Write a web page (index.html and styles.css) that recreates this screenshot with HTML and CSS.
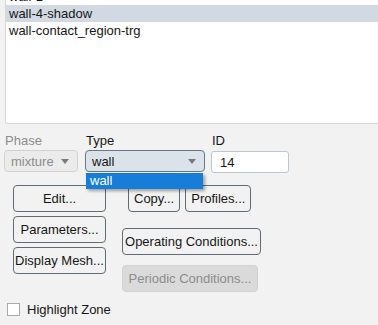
FILE: index.html
```html
<!DOCTYPE html>
<html lang="en">
<head>
    <meta charset="UTF-8">
    <title>Boundary Conditions</title>
    <link rel="stylesheet" href="styles.css">
</head>
<body>
    <div class="listbox">
        <ul class="rows">
            <li>wall-1</li>
            <li class="selected">wall-4-shadow</li>
            <li>wall-contact_region-trg</li>
        </ul>
    </div>

    <div class="fields">
        <div class="field phase">
            <label class="label disabled">Phase</label>
            <div class="combo combo-disabled">
                <span>mixture</span>
                <span class="arrow"></span>
            </div>
        </div>
        <div class="field type">
            <label class="label">Type</label>
            <div class="combo-wrap">
                <div class="combo combo-open">
                    <span>wall</span>
                    <span class="arrow"></span>
                </div>
                <ul class="popup">
                    <li class="active">wall</li>
                </ul>
            </div>
        </div>
        <div class="field id">
            <label class="label">ID</label>
            <input class="text-input" type="text" value="14">
        </div>
    </div>

    <div class="actions">
        <div class="left-col">
            <button class="btn btn-wide">Edit...</button>
            <button class="btn btn-wide">Parameters...</button>
            <button class="btn btn-wide">Display Mesh...</button>
        </div>
        <div class="right-col">
            <div class="btn-row">
                <button class="btn">Copy...</button>
                <button class="btn">Profiles...</button>
            </div>
            <button class="btn btn-operating">Operating Conditions...</button>
            <button class="btn btn-periodic" disabled>Periodic Conditions...</button>
        </div>
    </div>

    <label class="check">
        <span class="box"></span>
        Highlight Zone
    </label>
</body>
</html>
```

FILE: styles.css
```css
body {
    margin: 0;
    background-color: #f2f2f2;
    font-family: "Liberation Sans", Arial, sans-serif;
    font-size: 13px;
    color: #161616;
    overflow: hidden;
}
.listbox {
    box-sizing: border-box;
    height: 124px;
    margin-left: 5px;
    margin-right: -10px;
    background-color: #fff;
    border: 1px solid #d8d8d8;
    border-top: none;
    border-radius: 0 0 3px 3px;
    overflow: hidden;
}
.rows {
    list-style-type: none;
    margin: -12px 0 0 0;
    padding: 0;
}
.rows li {
    height: 17px;
    line-height: 17px;
    padding-left: 3px;
}
.rows li.selected {
    background-color: #d2d9e2;
}
.fields {
    display: flex;
    margin-top: 9px;
    padding-left: 4px;
}
.field {
    display: flex;
    flex-direction: column;
}
.label {
    height: 17px;
    line-height: 16px;
    padding-left: 1px;
}
.label.disabled {
    color: #8c8c8c;
}
.phase {
    width: 74px;
}
.type {
    width: 120px;
    margin-left: 7px;
}
.id {
    width: 78px;
    margin-left: 6px;
}
.combo {
    box-sizing: border-box;
    height: 22px;
    display: flex;
    align-items: center;
    justify-content: space-between;
    padding: 0 8px 0 6px;
    border-radius: 4px;
}
.combo-disabled {
    background-color: #ebebeb;
    border: 1px solid #d2d2d2;
    color: #8c8c8c;
}
.combo-open {
    background-color: #dce2ea;
    border: 1px solid #6c7784;
}
.arrow {
    width: 0;
    height: 0;
    border-left: 4px solid transparent;
    border-right: 4px solid transparent;
    border-top: 5px solid #7a7a7a;
}
.combo-wrap {
    position: relative;
}
.popup {
    position: absolute;
    top: 23px;
    left: 1px;
    width: 117px;
    list-style-type: none;
    margin: 0;
    padding: 0;
    background-color: #fff;
    box-shadow: 2px 2px 3px rgba(0, 0, 0, 0.35);
    z-index: 2;
}
.popup li {
    height: 16px;
    line-height: 16px;
    padding-left: 4px;
}
.popup li.active {
    background-color: #167ed8;
    color: #fff;
}
.text-input {
    box-sizing: border-box;
    height: 22px;
    margin-top: 1px;
    padding: 0 8px;
    border: 1px solid #bcc7d2;
    border-radius: 3px;
    background-color: #fff;
    font: inherit;
    color: inherit;
    outline: none;
}
.actions {
    display: flex;
    margin-top: 12px;
    padding-left: 13px;
}
.left-col {
    display: flex;
    flex-direction: column;
    gap: 4px;
    width: 93px;
}
.right-col {
    display: flex;
    flex-direction: column;
    align-items: flex-start;
    margin-left: 16px;
}
.btn-row {
    display: flex;
    gap: 5px;
    margin-left: 6px;
    margin-bottom: 16px;
}
.btn {
    box-sizing: border-box;
    height: 27px;
    padding: 0 5px;
    border: 1px solid #606b78;
    border-radius: 4px;
    background-color: #f2f2f2;
    font: inherit;
    color: inherit;
    white-space: nowrap;
}
.btn-wide {
    width: 93px;
    padding: 0;
}
.btn-operating {
    width: 139px;
    padding: 0;
    margin-bottom: 10px;
}
.btn-periodic {
    width: 136px;
    padding: 0;
    background-color: #dadada;
    border-color: #d2d2d2;
    color: #8c8c8c;
}
.check {
    display: flex;
    align-items: center;
    gap: 7px;
    margin-top: 10px;
    padding-left: 7px;
}
.box {
    box-sizing: border-box;
    width: 13px;
    height: 13px;
    border: 1px solid #a9a9a9;
    background-color: #fff;
}
```
